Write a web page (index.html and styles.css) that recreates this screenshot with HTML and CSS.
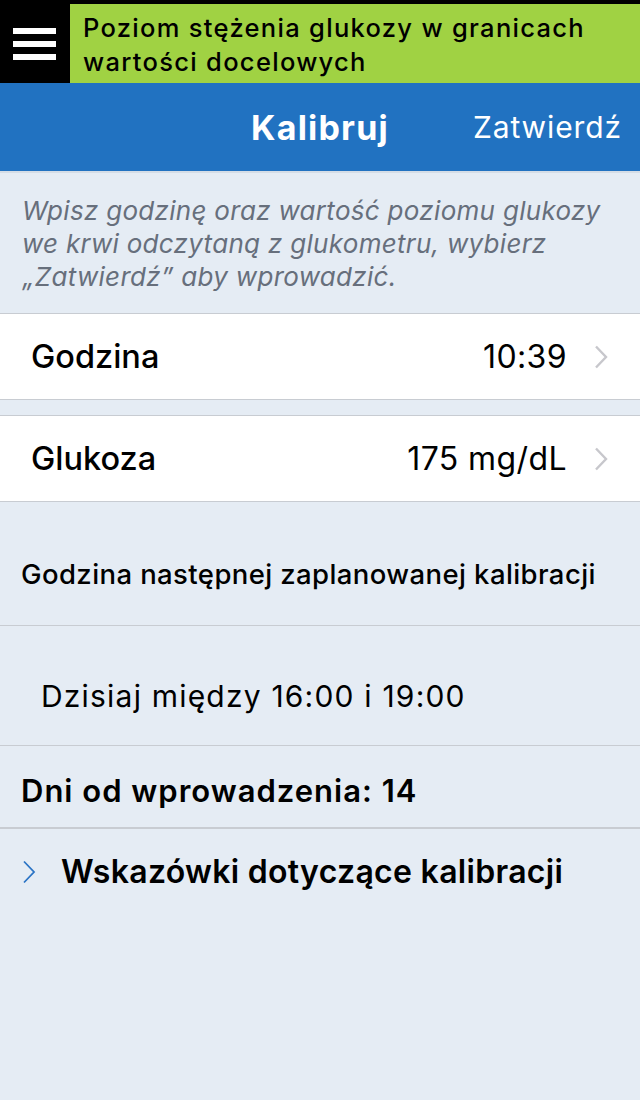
FILE: index.html
```html
<!DOCTYPE html>
<html lang="pl">
<head>
  <meta charset="UTF-8">
  <title>Kalibruj</title>
  <link rel="stylesheet" href="styles.css">
</head>
<body>

<div class="status">
  <div class="menu">
    <span></span><span></span><span></span>
  </div>
  <div class="alert">Poziom stężenia glukozy w granicach<br>wartości docelowych</div>
</div>

<div class="navbar">
  <div></div>
  <div class="title">Kalibruj</div>
  <div class="action">Zatwierdź</div>
</div>

<p class="hint">Wpisz godzinę oraz wartość poziomu glukozy<br>we krwi odczytaną z glukometru, wybierz<br>„Zatwierdź” aby wprowadzić.</p>

<div class="row">
  <span class="label">Godzina</span>
  <span class="value">10:39</span>
  <svg class="chev" width="14" height="24" viewBox="0 0 14 24"><path d="M2 1.5 L12 12 L2 22.5" fill="none" stroke="#c7c7cc" stroke-width="2.4"/></svg>
</div>

<div class="row second">
  <span class="label">Glukoza</span>
  <span class="value">175 mg/dL</span>
  <svg class="chev" width="14" height="24" viewBox="0 0 14 24"><path d="M2 1.5 L12 12 L2 22.5" fill="none" stroke="#c7c7cc" stroke-width="2.4"/></svg>
</div>

<div class="info next">Godzina następnej zaplanowanej kalibracji</div>
<div class="info when">Dzisiaj między 16:00 i 19:00</div>
<div class="info days">Dni od wprowadzenia: 14</div>

<div class="tips">
  <svg width="14" height="24" viewBox="0 0 14 24"><path d="M2 1.5 L12 12 L2 22.5" fill="none" stroke="#2b74c5" stroke-width="1.8"/></svg>
  <span>Wskazówki dotyczące kalibracji</span>
</div>

</body>
</html>
```

FILE: styles.css
```css
body {
  margin: 0;
  background: #e5ecf4;
  font-family: Inter, "Noto Sans", sans-serif;
  color: #000;
  width: 640px;
}

.status {
  display: flex;
  height: 83px;
  background: #000;
  padding-top: 4px;
  box-sizing: border-box;
}

.menu {
  width: 70px;
  display: flex;
  flex-direction: column;
  justify-content: center;
  gap: 7px;
  padding-left: 13px;
  box-sizing: border-box;
}

.menu span {
  display: block;
  width: 43px;
  height: 6px;
  background: #fff;
}

.alert {
  flex: 1;
  background: #a0d243;
  font-size: 25.5px;
  font-weight: 500;
  letter-spacing: 1.3px;
  line-height: 34px;
  padding: 7px 0 0 13px;
  white-space: nowrap;
}

.navbar {
  display: grid;
  grid-template-columns: 1fr auto 1fr;
  align-items: center;
  height: 88px;
  background: #2172c1;
  color: #fff;
  border-bottom: 2px solid #d5dde6;
}

.title {
  font-size: 34px;
  font-weight: 700;
  letter-spacing: 1.2px;
}

.action {
  text-align: right;
  font-size: 30px;
  letter-spacing: 0.9px;
  padding-right: 18px;
}

.hint {
  margin: 0;
  padding: 21px 0 20px 22px;
  font-size: 26px;
  letter-spacing: 0.3px;
  line-height: 33px;
  font-style: italic;
  color: #676f7c;
  white-space: nowrap;
}

.row {
  display: flex;
  align-items: center;
  height: 85px;
  background: #fff;
  border-top: 1px solid #c8ccd2;
  border-bottom: 1px solid #c8ccd2;
  padding: 0 32px 0 31px;
}

.row.second {
  margin-top: 15px;
}

.label {
  flex: 1;
  font-size: 32.5px;
  font-weight: 500;
}

.value {
  font-size: 32px;
  letter-spacing: 0.4px;
  margin-right: 27px;
}

.info {
  display: flex;
  align-items: center;
  box-sizing: border-box;
  border-bottom: 1px solid #c8ccd2;
  padding-left: 21px;
}

.next {
  height: 124px;
  padding-top: 20px;
  font-size: 27.5px;
  letter-spacing: 0.4px;
  font-weight: 500;
}

.when {
  height: 120px;
  padding-left: 41px;
  padding-top: 20px;
  font-size: 30px;
  letter-spacing: 1.2px;
}

.days {
  height: 83px;
  padding-top: 7px;
  font-size: 31px;
  font-weight: 600;
  letter-spacing: 1px;
  border-bottom-width: 2px;
}

.tips {
  display: flex;
  align-items: center;
  gap: 25px;
  padding: 23px 0 0 22px;
  font-size: 32px;
  font-weight: 600;
  letter-spacing: 0.3px;
}
```
